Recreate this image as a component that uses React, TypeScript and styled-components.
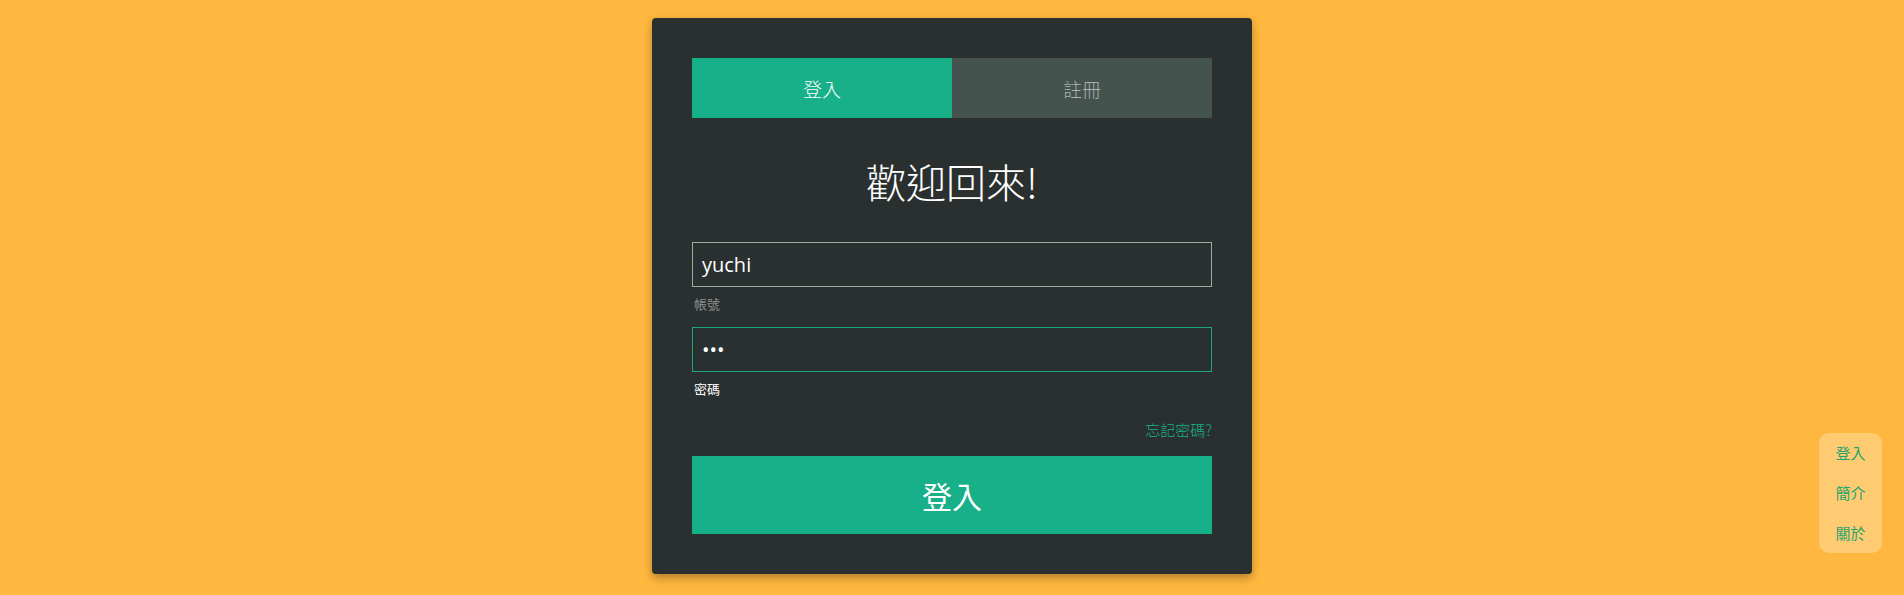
import React from "react";
import styled, { createGlobalStyle } from "styled-components";

const GlobalStyle = createGlobalStyle`
  html, body {
    margin: 0;
    padding: 0;
    background: #ffb83f;
    font-family: "Open Sans", "Noto Sans CJK TC", sans-serif;
  }
  * { box-sizing: border-box; }
`;

const Page = styled.div`
  min-height: 595px;
  display: flex;
  justify-content: center;
  align-items: flex-start;
  padding-top: 18px;
`;

const Card = styled.div`
  width: 600px;
  background: #2a302f;
  border-radius: 4px;
  padding: 40px 40px 40px;
  box-shadow: 0 4px 10px rgba(0, 0, 0, 0.3);
  display: flex;
  flex-direction: column;
`;

const Tabs = styled.div`
  display: grid;
  grid-template-columns: 1fr 1fr;
  height: 60px;
`;

const Tab = styled.div<{ $active?: boolean }>`
  display: flex;
  align-items: center;
  justify-content: center;
  background: ${(p) => (p.$active ? "#18b089" : "#45534f")};
  color: ${(p) => (p.$active ? "#ffffff" : "#a9b1ae")};
  font-size: 19px;
  font-weight: 300;
  font-family: "Noto Sans CJK TC", sans-serif;
`;

const Heading = styled.h1`
  margin: 39px 0 37px;
  text-align: center;
  color: #ffffff;
  font-size: 40px;
  line-height: 48px;
  font-weight: 300;
  font-family: "Noto Sans CJK TC", sans-serif;
`;

const Input = styled.input<{ $focused?: boolean }>`
  width: 100%;
  height: 45px;
  background: transparent;
  border: 1px solid ${(p) => (p.$focused ? "#1ea584" : "#a3a7a5")};
  outline: none;
  color: #ffffff;
  caret-color: #ffffff;
  font-family: "Open Sans", sans-serif;
  font-size: 20px;
  padding: 0 9px;
`;

const Label = styled.div<{ $light?: boolean }>`
  margin: 8px 0 0 2px;
  font-size: 13px;
  line-height: 18px;
  color: ${(p) => (p.$light ? "#ffffff" : "#8a8f8d")};
  font-family: "Noto Sans CJK TC", sans-serif;
`;

const FieldGap = styled.div`
  height: 14px;
`;

const Forgot = styled.a`
  align-self: flex-end;
  margin-top: 22px;
  font-size: 15px;
  line-height: 20px;
  color: #18b089;
  text-decoration: none;
  font-weight: 300;
  font-family: "Noto Sans CJK TC", sans-serif;
`;

const Submit = styled.button`
  margin-top: 16px;
  height: 78px;
  border: none;
  background: #18b089;
  color: #ffffff;
  font-size: 30px;
  font-family: "Noto Sans CJK TC", sans-serif;
  cursor: pointer;
`;

const SideNav = styled.nav`
  position: fixed;
  right: 22px;
  bottom: 42px;
  width: 63px;
  height: 120px;
  background: #ffcb72;
  border-radius: 10px;
  display: flex;
  flex-direction: column;
  align-items: center;
  justify-content: center;
  gap: 18px;
`;

const NavItem = styled.a`
  color: #1fa56f;
  font-size: 15px;
  line-height: 22px;
  text-decoration: none;
  font-family: "Noto Sans CJK TC", sans-serif;
`;

export default function App() {
  return (
    <>
      <GlobalStyle />
      <Page>
        <Card>
          <Tabs>
            <Tab $active>登入</Tab>
            <Tab>註冊</Tab>
          </Tabs>
          <Heading>歡迎回來!</Heading>
          <Input defaultValue="yuchi" />
          <Label>帳號</Label>
          <FieldGap />
          <Input type="password" defaultValue="abc" $focused autoFocus />
          <Label $light>密碼</Label>
          <Forgot href="#">忘記密碼?</Forgot>
          <Submit>登入</Submit>
        </Card>
      </Page>
      <SideNav>
        <NavItem href="#">登入</NavItem>
        <NavItem href="#">簡介</NavItem>
        <NavItem href="#">關於</NavItem>
      </SideNav>
    </>
  );
}
